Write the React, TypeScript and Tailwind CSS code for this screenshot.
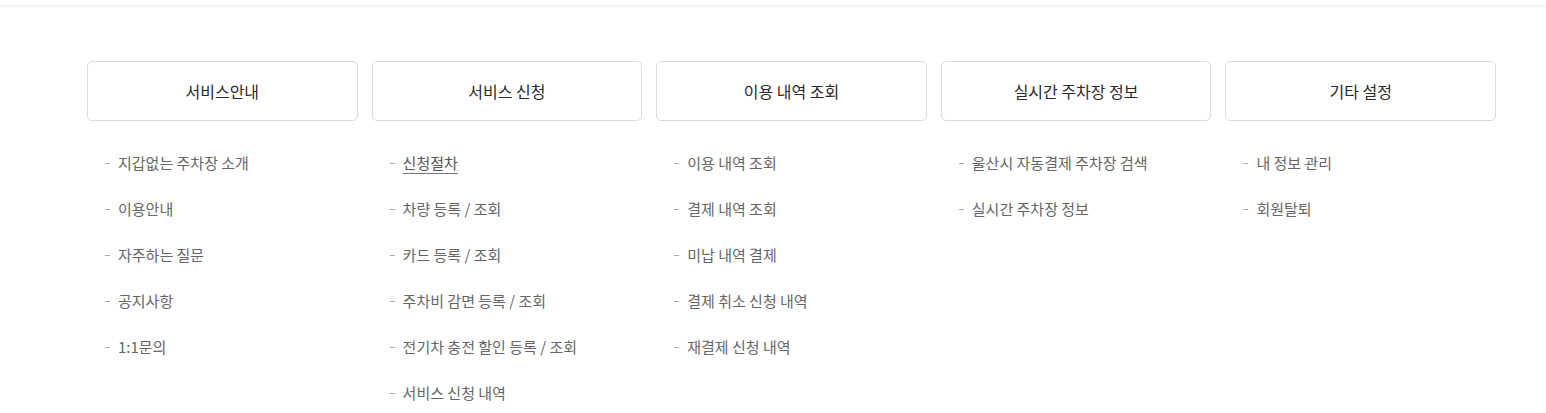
import React from 'react';

type Menu = {
  title: string;
  items: { label: string; active?: boolean }[];
};

const MENUS: Menu[] = [
  {
    title: '서비스안내',
    items: [
      { label: '지갑없는 주차장 소개' },
      { label: '이용안내' },
      { label: '자주하는 질문' },
      { label: '공지사항' },
      { label: '1:1문의' },
    ],
  },
  {
    title: '서비스 신청',
    items: [
      { label: '신청절차', active: true },
      { label: '차량 등록 / 조회' },
      { label: '카드 등록 / 조회' },
      { label: '주차비 감면 등록 / 조회' },
      { label: '전기차 충전 할인 등록 / 조회' },
      { label: '서비스 신청 내역' },
    ],
  },
  {
    title: '이용 내역 조회',
    items: [
      { label: '이용 내역 조회' },
      { label: '결제 내역 조회' },
      { label: '미납 내역 결제' },
      { label: '결제 취소 신청 내역' },
      { label: '재결제 신청 내역' },
    ],
  },
  {
    title: '실시간 주차장 정보',
    items: [{ label: '울산시 자동결제 주차장 검색' }, { label: '실시간 주차장 정보' }],
  },
  {
    title: '기타 설정',
    items: [{ label: '내 정보 관리' }, { label: '회원탈퇴' }],
  },
];

const App: React.FC = () => {
  return (
    <div className="min-h-[413px] bg-white font-['Noto_Sans_CJK_KR','Noto_Sans',sans-serif]">
      {/* header edge */}
      <div className="h-[6px] border-b border-[#efefef] shadow-[0_1px_2px_rgba(0,0,0,0.03)]" />

      <nav className="ml-[87px] mt-[55px] grid w-[1409px] grid-cols-5 gap-x-[14px]">
        {MENUS.map((menu) => (
          <div key={menu.title}>
            <div className="flex h-[60px] items-center justify-center rounded-[5px] border border-[#dcdcdc] text-[16px] text-[#2a2a2a]">
              {menu.title}
            </div>
            <ul className="mt-[32px] flex flex-col gap-[26px] pl-[18px]">
              {menu.items.map((item) => (
                <li key={item.label} className="flex h-[20px] items-center text-[15px] leading-[20px]">
                  <span className="mr-[8px] inline-block h-px w-[5px] bg-[#aaa]" />
                  <a
                    href="#"
                    className={
                      item.active
                        ? 'text-[#555] underline underline-offset-[4px] decoration-[#777]'
                        : 'text-[#666]'
                    }
                  >
                    {item.label}
                  </a>
                </li>
              ))}
            </ul>
          </div>
        ))}
      </nav>
    </div>
  );
};

export default App;
